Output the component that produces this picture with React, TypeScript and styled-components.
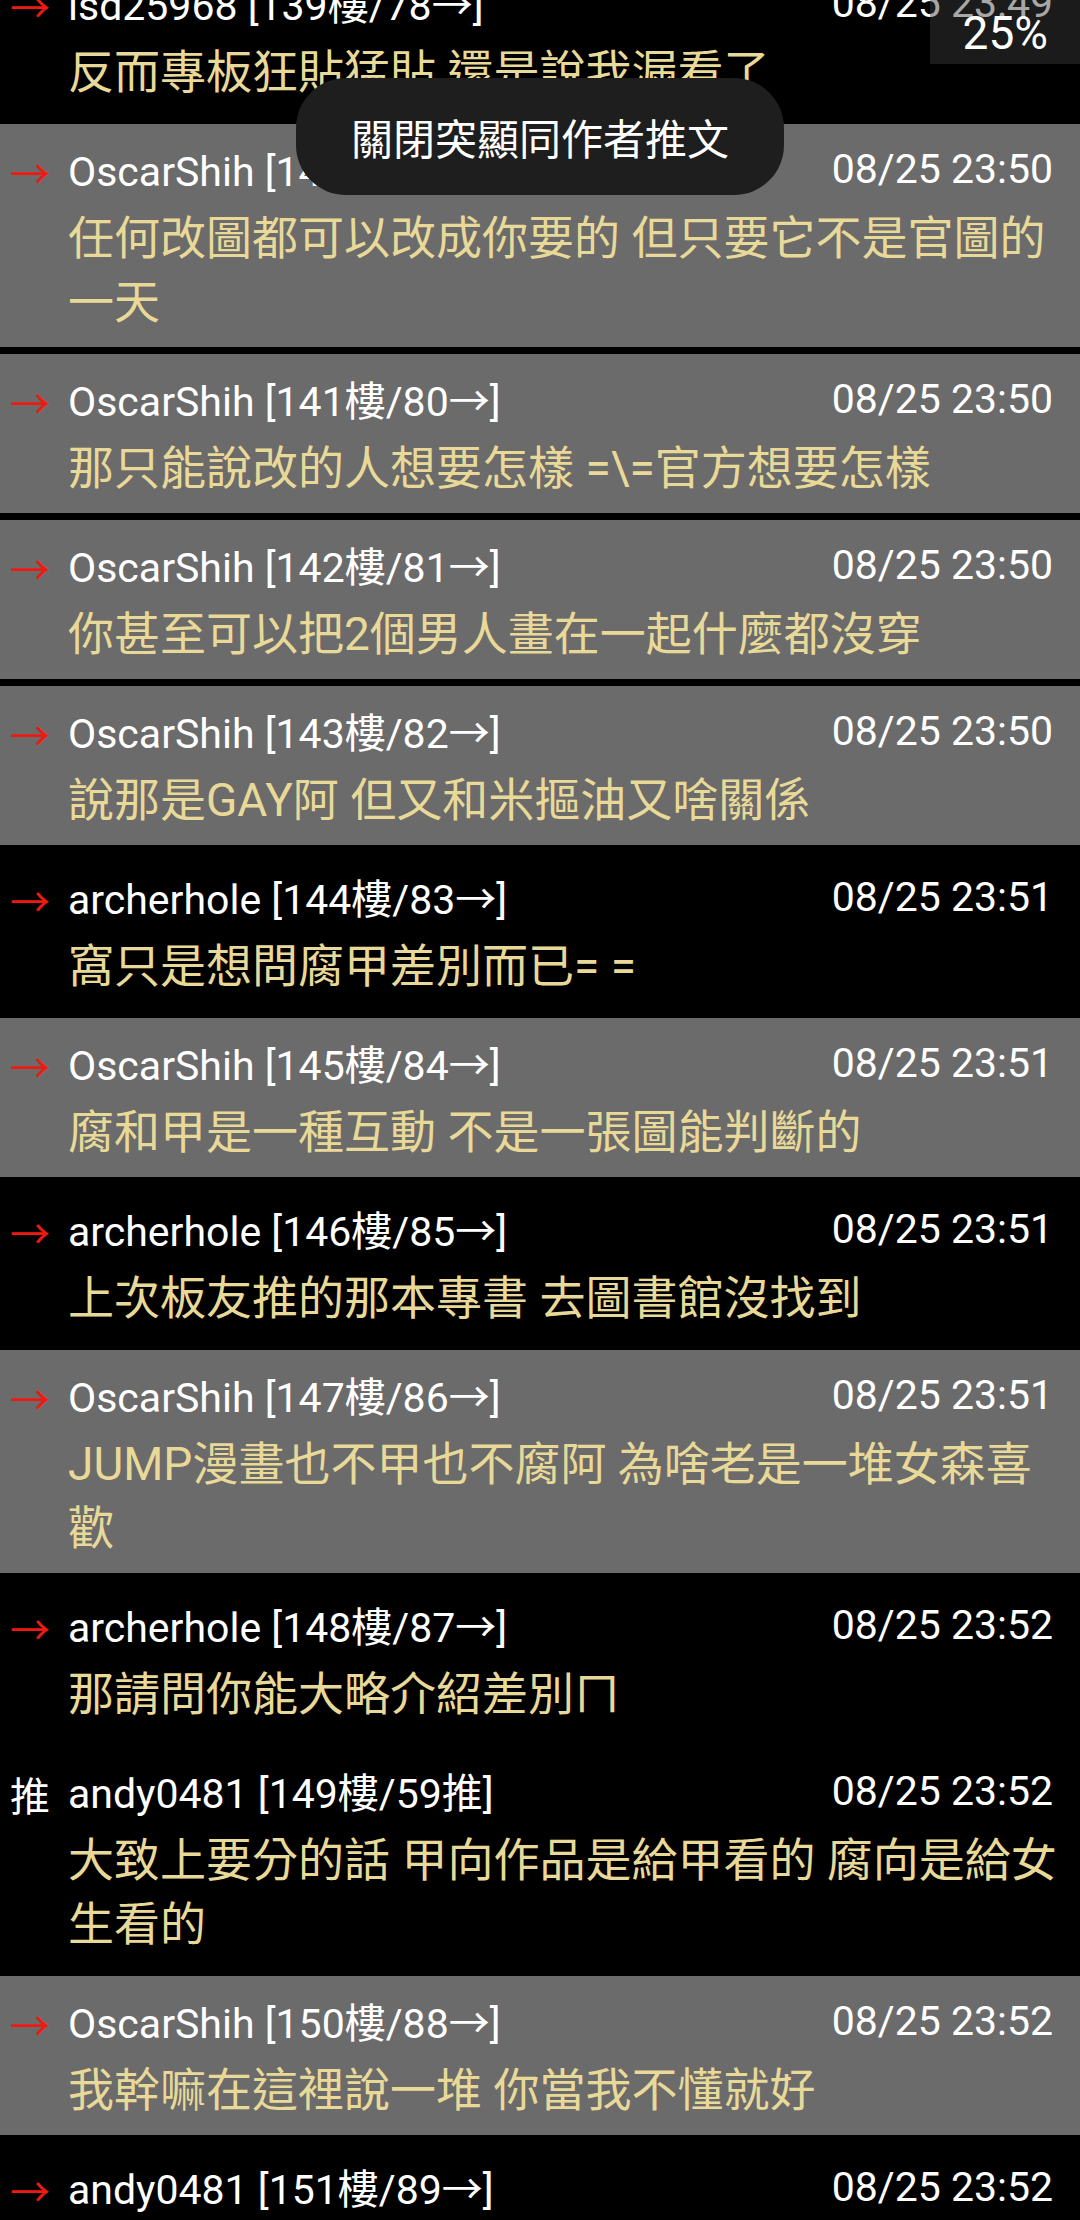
import React from "react";
import styled, { createGlobalStyle } from "styled-components";

const GlobalStyle = createGlobalStyle`
  html, body {
    margin: 0;
    padding: 0;
    background: #000;
  }
  body {
    font-family: Roboto, "Noto Sans CJK TC", sans-serif;
  }
`;

const Screen = styled.div`
  position: relative;
  width: 1080px;
  height: 2220px;
  overflow: hidden;
  background: #000;
`;

const List = styled.div`
  display: flex;
  flex-direction: column;
  gap: 7px;
  margin-top: -42px;
`;

const Row = styled.div<{ $gray: boolean }>`
  display: grid;
  grid-template-columns: 68px 1fr;
  padding: 24px 12px 13px 0;
  background: ${(p) => (p.$gray ? "#6b6b6b" : "#000")};
`;

const Tag = styled.div<{ $push: boolean }>`
  padding-left: 10px;
  margin-top: 4px;
  font-family: Roboto, "Noto Sans CJK TC", sans-serif;
  font-size: 40px;
  line-height: 48px;
  color: ${(p) => (p.$push ? "#ffffff" : "#ee1a12")};
`;

const Body = styled.div`
  display: flex;
  flex-direction: column;
  min-width: 0;
`;

const Header = styled.div`
  display: flex;
  justify-content: space-between;
  align-items: flex-start;
  height: 48px;
  padding-right: 15px;
  color: #ffffff;
  font-family: Roboto, "Noto Sans CJK TC", sans-serif;
  font-size: 41px;
`;

const Name = styled.span`
  line-height: 48px;
  white-space: nowrap;
`;

const Time = styled.span`
  line-height: 42px;
  white-space: nowrap;
`;

const Message = styled.div`
  margin-top: 10px;
  font-family: Roboto, "Noto Sans CJK TC", sans-serif;
  font-size: 46px;
  line-height: 64px;
  color: #e9d999;
`;

const Toast = styled.div`
  position: absolute;
  top: 78px;
  left: 50%;
  transform: translateX(-50%);
  height: 117px;
  padding: 0 55px;
  border-radius: 50px;
  background: #1e1e1e;
  color: #ffffff;
  font-family: "Noto Sans CJK TC", sans-serif;
  font-size: 42px;
  line-height: 117px;
  white-space: nowrap;
`;

const Progress = styled.div`
  position: absolute;
  top: 0;
  right: 0;
  height: 64px;
  box-sizing: border-box;
  padding: 3px 32px 0 33px;
  background: rgba(60, 60, 60, 0.45);
  color: #ffffff;
  font-family: Roboto, sans-serif;
  font-size: 46px;
  line-height: 61px;
`;

type Comment = {
  gray: boolean;
  tag: string;
  name: string;
  time: string;
  text: string;
};

const comments: Comment[] = [
  { gray: false, tag: "→", name: "lsd25968 [139樓/78→]", time: "08/25 23:49", text: "反而專板狂貼猛貼  還是說我漏看了" },
  { gray: true, tag: "→", name: "OscarShih [140樓/79→]", time: "08/25 23:50", text: "任何改圖都可以改成你要的 但只要它不是官圖的一天" },
  { gray: true, tag: "→", name: "OscarShih [141樓/80→]", time: "08/25 23:50", text: "那只能說改的人想要怎樣 =\\=官方想要怎樣" },
  { gray: true, tag: "→", name: "OscarShih [142樓/81→]", time: "08/25 23:50", text: "你甚至可以把2個男人畫在一起什麼都沒穿" },
  { gray: true, tag: "→", name: "OscarShih [143樓/82→]", time: "08/25 23:50", text: "說那是GAY阿 但又和米摳油又啥關係" },
  { gray: false, tag: "→", name: "archerhole [144樓/83→]", time: "08/25 23:51", text: "窩只是想問腐甲差別而已= =" },
  { gray: true, tag: "→", name: "OscarShih [145樓/84→]", time: "08/25 23:51", text: "腐和甲是一種互動 不是一張圖能判斷的" },
  { gray: false, tag: "→", name: "archerhole [146樓/85→]", time: "08/25 23:51", text: "上次板友推的那本專書 去圖書館沒找到" },
  { gray: true, tag: "→", name: "OscarShih [147樓/86→]", time: "08/25 23:51", text: "JUMP漫畫也不甲也不腐阿 為啥老是一堆女森喜歡" },
  { gray: false, tag: "→", name: "archerhole [148樓/87→]", time: "08/25 23:52", text: "那請問你能大略介紹差別ㄇ" },
  { gray: false, tag: "推", name: "andy0481 [149樓/59推]", time: "08/25 23:52", text: "大致上要分的話 甲向作品是給甲看的 腐向是給女生看的" },
  { gray: true, tag: "→", name: "OscarShih [150樓/88→]", time: "08/25 23:52", text: "我幹嘛在這裡說一堆 你當我不懂就好" },
  { gray: false, tag: "→", name: "andy0481 [151樓/89→]", time: "08/25 23:52", text: "\u00a0" },
];

export default function App() {
  return (
    <Screen>
      <GlobalStyle />
      <List>
        {comments.map((c, i) => (
          <Row key={i} $gray={c.gray}>
            <Tag $push={c.tag === "推"}>{c.tag}</Tag>
            <Body>
              <Header>
                <Name>{c.name}</Name>
                <Time>{c.time}</Time>
              </Header>
              <Message>{c.text}</Message>
            </Body>
          </Row>
        ))}
      </List>
      <Progress>25%</Progress>
      <Toast>關閉突顯同作者推文</Toast>
    </Screen>
  );
}
